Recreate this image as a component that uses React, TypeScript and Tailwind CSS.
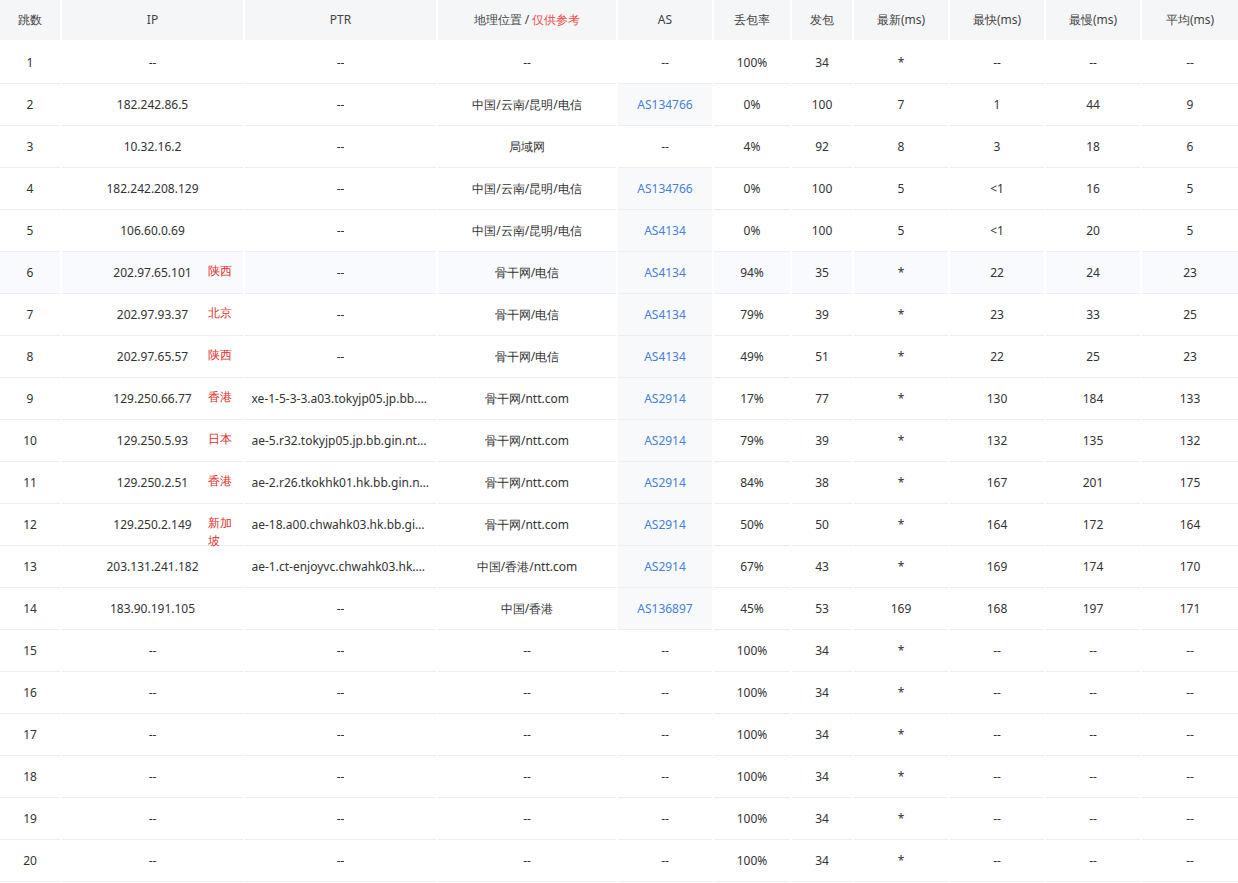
const cols = "grid grid-cols-[60px_181px_191px_178px_94px_76px_60px_94px_94px_94px_96px] gap-x-[2px]";

type Row = [string, string, string, string, string, string, string, string, string, string, string, string];
// hop, ip, tag, ptr, geo, as, loss, sent, last, best, worst, avg
const rows: Row[] = [
  ["1", "--", "", "--", "--", "--", "100%", "34", "*", "--", "--", "--"],
  ["2", "182.242.86.5", "", "--", "中国/云南/昆明/电信", "AS134766", "0%", "100", "7", "1", "44", "9"],
  ["3", "10.32.16.2", "", "--", "局域网", "--", "4%", "92", "8", "3", "18", "6"],
  ["4", "182.242.208.129", "", "--", "中国/云南/昆明/电信", "AS134766", "0%", "100", "5", "<1", "16", "5"],
  ["5", "106.60.0.69", "", "--", "中国/云南/昆明/电信", "AS4134", "0%", "100", "5", "<1", "20", "5"],
  ["6", "202.97.65.101", "陕西", "--", "骨干网/电信", "AS4134", "94%", "35", "*", "22", "24", "23"],
  ["7", "202.97.93.37", "北京", "--", "骨干网/电信", "AS4134", "79%", "39", "*", "23", "33", "25"],
  ["8", "202.97.65.57", "陕西", "--", "骨干网/电信", "AS4134", "49%", "51", "*", "22", "25", "23"],
  ["9", "129.250.66.77", "香港", "xe-1-5-3-3.a03.tokyjp05.jp.bb.gin.ntt.net", "骨干网/ntt.com", "AS2914", "17%", "77", "*", "130", "184", "133"],
  ["10", "129.250.5.93", "日本", "ae-5.r32.tokyjp05.jp.bb.gin.ntt.net", "骨干网/ntt.com", "AS2914", "79%", "39", "*", "132", "135", "132"],
  ["11", "129.250.2.51", "香港", "ae-2.r26.tkokhk01.hk.bb.gin.ntt.net", "骨干网/ntt.com", "AS2914", "84%", "38", "*", "167", "201", "175"],
  ["12", "129.250.2.149", "新加坡", "ae-18.a00.chwahk03.hk.bb.gin.ntt.net", "骨干网/ntt.com", "AS2914", "50%", "50", "*", "164", "172", "164"],
  ["13", "203.131.241.182", "", "ae-1.ct-enjoyvc.chwahk03.hk.bb.gin.ntt.net", "中国/香港/ntt.com", "AS2914", "67%", "43", "*", "169", "174", "170"],
  ["14", "183.90.191.105", "", "--", "中国/香港", "AS136897", "45%", "53", "169", "168", "197", "171"],
  ...[15, 16, 17, 18, 19, 20].map(
    (n) => [String(n), "--", "", "--", "--", "--", "100%", "34", "*", "--", "--", "--"] as Row
  ),
];

const cell = "h-[42px] flex items-center justify-center border-b border-[#ebeef2] px-1 min-w-0";

export default function App() {
  return (
    <div className="w-[1238px] h-[883px] bg-white text-[12px] text-[#333] font-['Microsoft_YaHei','Noto_Sans_CJK_SC',sans-serif]">
      <div className={cols}>
        {["跳数", "IP", "PTR", "", "AS", "丢包率", "发包", "最新(ms)", "最快(ms)", "最慢(ms)", "平均(ms)"].map((h, i) => (
          <div key={i} className="h-[42px] flex items-center justify-center bg-[#f5f6f8] text-[#444] border-b-2 border-white">
            {i === 3 ? (
              <span>
                地理位置 / <span className="text-[#f0504a]">仅供参考</span>
              </span>
            ) : (
              h
            )}
          </div>
        ))}
      </div>
      {rows.map((r) => {
        const hover = r[0] === "6";
        const bg = hover ? "bg-[#f8fafd]" : "";
        return (
          <div key={r[0]} className={cols}>
            <div className={`${cell} ${bg}`}>{r[0]}</div>
            <div className={`${cell} ${bg} relative`}>
              {r[1]}
              {r[2] && (
                <span className="absolute left-[146px] top-[10px] text-[12px] text-[#e5302b]">{r[2]}</span>
              )}
            </div>
            <div className={`${cell} ${bg}`}>
              <span className="block max-w-[178px] truncate">{r[3]}</span>
            </div>
            <div className={`${cell} ${bg}`}>{r[4]}</div>
            <div className={`${cell} ${r[5] !== "--" ? "bg-[#f7f9fb] text-[#4a7fe0]" : bg}`}>{r[5]}</div>
            <div className={`${cell} ${bg}`}>{r[6]}</div>
            <div className={`${cell} ${bg}`}>{r[7]}</div>
            <div className={`${cell} ${bg}`}>{r[8]}</div>
            <div className={`${cell} ${bg}`}>{r[9]}</div>
            <div className={`${cell} ${bg}`}>{r[10]}</div>
            <div className={`${cell} ${bg}`}>{r[11]}</div>
          </div>
        );
      })}
    </div>
  );
}
